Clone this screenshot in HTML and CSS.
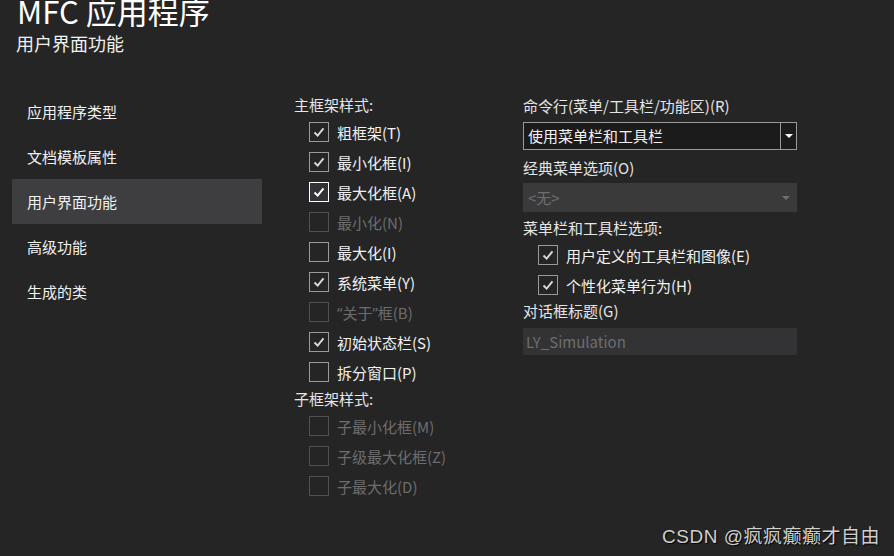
FILE: index.html
```html
<!DOCTYPE html>
<html lang="zh-CN">
<head>
    <meta charset="UTF-8">
    <title>MFC 应用程序</title>
    <link rel="stylesheet" href="styles.css">
</head>
<body>
    <div class="header">
        <div class="title">MFC 应用程序</div>
        <div class="subtitle">用户界面功能</div>
    </div>

    <div class="main">
        <ul class="nav">
            <li>应用程序类型</li>
            <li>文档模板属性</li>
            <li class="active">用户界面功能</li>
            <li>高级功能</li>
            <li>生成的类</li>
        </ul>

        <div class="col-mid">
            <div class="group-label">主框架样式:</div>
            <div class="check on"><span class="box"><svg viewBox="0 0 20 20"><polyline points="5,10.5 8.5,14 15,6"/></svg></span>粗框架(T)</div>
            <div class="check on"><span class="box"><svg viewBox="0 0 20 20"><polyline points="5,10.5 8.5,14 15,6"/></svg></span>最小化框(I)</div>
            <div class="check on focus"><span class="box"><svg viewBox="0 0 20 20"><polyline points="5,10.5 8.5,14 15,6"/></svg></span>最大化框(A)</div>
            <div class="check disabled"><span class="box"></span>最小化(N)</div>
            <div class="check"><span class="box"></span>最大化(I)</div>
            <div class="check on"><span class="box"><svg viewBox="0 0 20 20"><polyline points="5,10.5 8.5,14 15,6"/></svg></span>系统菜单(Y)</div>
            <div class="check disabled"><span class="box"></span><span class="q">“</span>关于<span class="q">”</span>框(B)</div>
            <div class="check on"><span class="box"><svg viewBox="0 0 20 20"><polyline points="5,10.5 8.5,14 15,6"/></svg></span>初始状态栏(S)</div>
            <div class="check"><span class="box"></span>拆分窗口(P)</div>

            <div class="group-label">子框架样式:</div>
            <div class="check disabled"><span class="box"></span>子最小化框(M)</div>
            <div class="check disabled"><span class="box"></span>子级最大化框(Z)</div>
            <div class="check disabled"><span class="box"></span>子最大化(D)</div>
        </div>

        <div class="col-right">
            <div class="field-label">命令行(菜单/工具栏/功能区)(R)</div>
            <div class="select">
                <span class="select-text">使用菜单栏和工具栏</span>
                <span class="select-btn"><span class="arrow"></span></span>
            </div>

            <div class="field-label">经典菜单选项(O)</div>
            <div class="select disabled">
                <span class="select-text">&lt;无&gt;</span>
                <span class="select-btn"><span class="arrow"></span></span>
            </div>

            <div class="field-label">菜单栏和工具栏选项:</div>
            <div class="check on"><span class="box"><svg viewBox="0 0 20 20"><polyline points="5,10.5 8.5,14 15,6"/></svg></span>用户定义的工具栏和图像(E)</div>
            <div class="check on"><span class="box"><svg viewBox="0 0 20 20"><polyline points="5,10.5 8.5,14 15,6"/></svg></span>个性化菜单行为(H)</div>

            <div class="field-label short">对话框标题(G)</div>
            <div class="textbox">LY_Simulation</div>
        </div>
    </div>

    <div class="watermark">CSDN @疯疯癫癫才自由</div>
</body>
</html>
```

FILE: styles.css
```css
body {
    margin: 0;
    width: 894px;
    height: 556px;
    overflow: hidden;
    position: relative;
    background-color: #252526;
    color: #f1f1f1;
    font-family: "Noto Sans CJK SC", "Noto Sans", sans-serif;
    font-size: 15px;
}
.header {
    padding-left: 17px;
}
.title {
    font-size: 31px;
    line-height: 32px;
    margin-top: -5px;
    color: #ffffff;
}
.subtitle {
    font-size: 18px;
    line-height: 18px;
    margin-top: 7px;
    margin-left: -1px;
}
.main {
    display: flex;
    margin-top: 37px;
    padding-left: 12px;
}
.nav {
    list-style: none;
    margin: 0;
    padding: 0;
    width: 250px;
    margin-right: 32px;
}
.nav li {
    height: 45px;
    line-height: 45px;
    padding-left: 15px;
    color: #f1f1f1;
}
.nav li.active {
    background-color: #3e3e40;
}
.col-mid {
    width: 229px;
    padding-top: 4px;
}
.col-right {
    width: 274px;
    padding-top: 5px;
}
.group-label {
    height: 24px;
    line-height: 24px;
    color: #e6e6e6;
}
.check {
    display: flex;
    align-items: center;
    height: 30px;
    padding-left: 15px;
}
.box {
    width: 18px;
    height: 18px;
    border: 1px solid #9a9a9a;
    margin-right: 8px;
    display: flex;
}
.box svg {
    width: 18px;
    height: 18px;
}
.box polyline {
    fill: none;
    stroke: #d8d8d8;
    stroke-width: 2.2;
}
.check.focus .box {
    border-color: #ffffff;
    background-color: #333337;
}
.check.focus .box polyline {
    stroke: #ffffff;
}
.check.disabled {
    color: #6d6d6d;
}
.check.disabled .box {
    border-color: #505050;
}
.q {
    font-family: "Noto Sans", sans-serif;
}
.field-label {
    height: 24px;
    line-height: 24px;
    color: #e6e6e6;
}
.field-label.short {
    height: 22px;
    line-height: 22px;
    margin-bottom: 6px;
}
.select {
    display: flex;
    height: 26px;
    border: 1px solid #9a9a9a;
    background-color: #1b1b1c;
    margin-top: 4px;
    margin-bottom: 6px;
}
.select-text {
    flex: 1;
    line-height: 26px;
    padding-left: 4px;
    color: #f1f1f1;
}
.select-btn {
    width: 15px;
    border-left: 1px solid #9a9a9a;
    display: flex;
    align-items: center;
    justify-content: center;
}
.arrow {
    width: 0;
    height: 0;
    border-left: 4px solid transparent;
    border-right: 4px solid transparent;
    border-top: 4px solid #ffffff;
}
.select.disabled {
    border-color: #3a3a3b;
    background-color: #3a3a3b;
    margin-top: 3px;
    margin-bottom: 4px;
    height: 27px;
}
.select.disabled .select-text {
    color: #6d6d6d;
    line-height: 27px;
}
.select.disabled .select-btn {
    border-left: none;
    width: 20px;
}
.select.disabled .arrow {
    border-top-color: #707070;
}
.textbox {
    height: 27px;
    line-height: 27px;
    padding-left: 3px;
    background-color: #333335;
    color: #6d6d6d;
}
.watermark {
    position: absolute;
    right: 14px;
    bottom: 8px;
    font-family: "Liberation Sans", "Noto Sans CJK SC", sans-serif;
    font-size: 19px;
    letter-spacing: 0.5px;
    color: #cfcfcf;
    text-shadow: 1px 1px 1px #000;
}
```
